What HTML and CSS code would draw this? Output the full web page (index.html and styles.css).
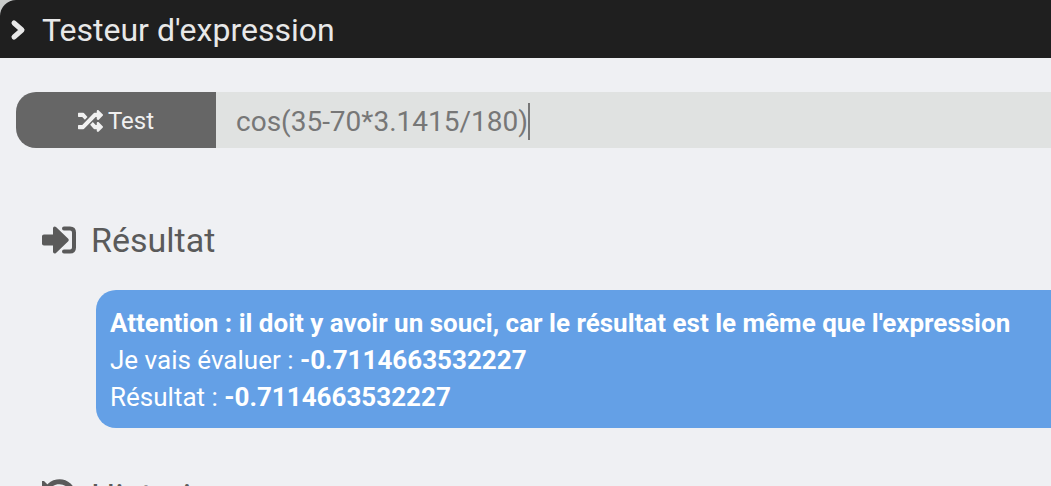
FILE: index.html
```html
<!DOCTYPE html>
<html lang="fr">
<head>
<meta charset="utf-8">
<title>Testeur d'expression</title>
<link rel="stylesheet" href="styles.css">
</head>
<body>
<main class="dialog">
  <header class="dialog-header">
    <svg class="chevron" viewBox="0 0 16 22" aria-hidden="true"><path d="M4 4l8 7-8 7"/></svg>
    <h1 class="dialog-title">Testeur d'expression</h1>
  </header>
  <div class="dialog-body">
    <form class="test-bar">
      <button class="test-button" type="button">
        <svg class="shuffle" viewBox="0 0 512 448" aria-hidden="true"><path d="M505 88 425 8c-15-15-41-4-41 17v31h-46a24 24 0 0 0-18 8L87 308H12c-7 0-12 5-12 12v60c0 7 5 12 12 12h95a24 24 0 0 0 18-8L363 140h21v40c0 21 26 32 41 17l80-80c9-9 9-21 0-29zM12 140h75l54 57 53-57-69-76a24 24 0 0 0-18-8H12C5 56 0 61 0 68v60c0 7 5 12 12 12zm372 168h-21l-60-65-54 57 71 84a24 24 0 0 0 18 8h46v31c0 21 26 32 41 17l80-80c9-9 9-21 0-29l-80-80c-15-15-41-4-41 17z"/></svg>
        <span>Test</span>
      </button>
      <div class="test-field">
        <input class="test-input" type="text" aria-label="Expression" value="cos(35-70*3.1415/180)">
        <span class="caret" aria-hidden="true"></span>
      </div>
    </form>
    <section class="section">
      <h2 class="section-title">
        <svg class="section-icon" viewBox="0 0 36 36" aria-hidden="true"><path d="M2 12.500h9V6.500c0-1.800 1.700-2.600 3-1.400L26 16.500c1 1 1 2 0 3L14 30.900c-1.300 1.200-3 .4-3-1.400v-6H2c-1.200 0-2-.8-2-2v-7c0-1.200.8-2 2-2z"/><path class="stroke" d="M22 6.500h6c2.800 0 4 1.500 4 4v15c0 2.500-1.200 4-4 4h-6"/></svg>
        Résultat
      </h2>
      <div class="alert">
        <p><strong>Attention : il doit y avoir un souci, car le résultat est le même que l'expression</strong></p>
        <p>Je vais évaluer : <strong>-0.7114663532227</strong></p>
        <p>Résultat : <strong>-0.7114663532227</strong></p>
      </div>
    </section>
    <section class="section">
      <h2 class="section-title">
        <svg class="section-icon" viewBox="0 0 36 36" aria-hidden="true"><path class="stroke thick" d="M5 11a14 14 0 1 1-1 11"/><path d="M0 3h2l12 12v2H2c-1 0-2-1-2-2z"/></svg>
        Historique
      </h2>
    </section>
  </div>
</main>
</body>
</html>
```
FILE: styles.css
```css
* {
  box-sizing: border-box;
}

body {
  margin: 0;
  height: 100vh;
  overflow: hidden;
  background: #c9cbca;
  color: #5a5a5a;
  font-family: Roboto, "Liberation Sans", sans-serif;
}

h1,
h2,
p {
  margin: 0;
  font-weight: 400;
}

.dialog {
  min-height: 100vh;
  border-top-left-radius: 16px;
  overflow: hidden;
  background: #eff0f3;
}

.dialog-header {
  display: flex;
  align-items: center;
  gap: 16px;
  height: 58px;
  padding: 2px 10px 0;
  background: #1f1f1f;
  color: #e8e8e8;
}

.chevron {
  width: 16px;
  height: 22px;
  fill: none;
  stroke: currentColor;
  stroke-width: 5;
  stroke-linecap: round;
  stroke-linejoin: round;
}

.dialog-title {
  font-size: 32px;
  line-height: 40px;
}

.dialog-body {
  padding: 34px 0 0 16px;
}

.test-bar {
  display: flex;
  height: 56px;
}

.test-button {
  display: flex;
  align-items: center;
  justify-content: center;
  gap: 5px;
  flex: none;
  width: 200px;
  padding: 2px 0 0;
  border: 0;
  border-radius: 20px 0 0 20px;
  background: #666;
  color: #f0f0f0;
  font-family: inherit;
  font-size: 24px;
}

.shuffle {
  width: 25px;
  height: 22px;
  fill: currentColor;
}

.test-field {
  display: flex;
  align-items: center;
  flex: 1;
  padding: 2px 0 0 20px;
  background: #e0e2e1;
}

.test-input {
  field-sizing: content;
  padding: 0;
  border: 0;
  outline: 0;
  background: transparent;
  color: #777;
  font-family: inherit;
  font-size: 28px;
}

.caret {
  width: 2px;
  height: 37px;
  background: #777;
}

.section {
  padding: 68px 0 0 26px;
}

.section + .section {
  padding-top: 44px;
}

.section-title {
  display: flex;
  align-items: center;
  gap: 13px;
  font-size: 34px;
  line-height: 48px;
}

.section-icon {
  width: 36px;
  height: 36px;
  fill: #5a5a5a;
}

.stroke {
  fill: none;
  stroke: #5a5a5a;
  stroke-width: 4;
  stroke-linecap: round;
}

.thick {
  stroke-width: 5;
}

.alert {
  margin: 26px 0 0 54px;
  padding: 15px 14px 12px;
  border-radius: 20px 0 0 20px;
  background: #64a0e6;
  color: #fff;
  font-size: 26px;
  line-height: 37px;
  white-space: nowrap;
}
```
